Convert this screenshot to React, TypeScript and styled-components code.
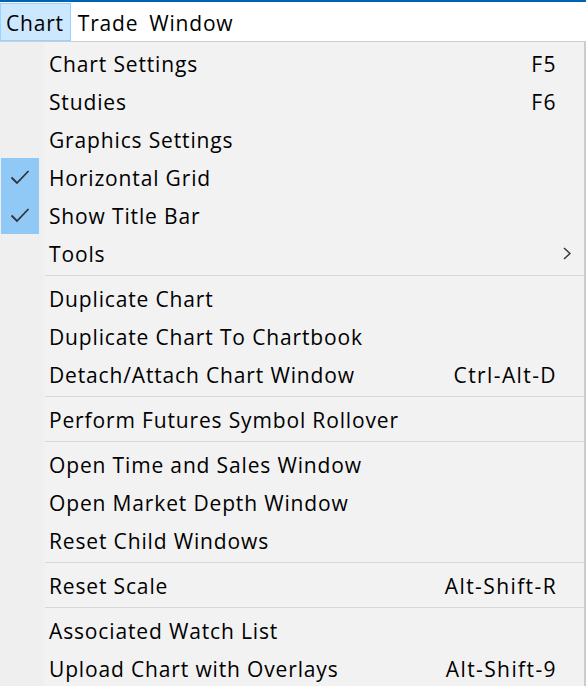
import React from "react";
import styled, { createGlobalStyle } from "styled-components";

const Global = createGlobalStyle`
  html, body { margin: 0; padding: 0; background: #ffffff; }
  body { font-family: "Open Sans", "Noto Sans", sans-serif; overflow: hidden; }
`;

const Frame = styled.div`
  width: 586px;
  height: 686px;
  display: flex;
  flex-direction: column;
  overflow: hidden;
  border-top: 2px solid #0063b1;
  box-sizing: border-box;
`;

const MenuBar = styled.div`
  height: 39px;
  display: flex;
  align-items: stretch;
  background: #ffffff;
  border-bottom: 1px solid #cccccc;
  flex-shrink: 0;
`;

const BarItem = styled.div<{ $open?: boolean }>`
  display: flex;
  align-items: center;
  padding: ${(p) => (p.$open ? "1px 6px 0 5px" : "1px 4px 0 5px")};
  margin-right: ${(p) => (p.$open ? "1px" : "0")};
  font-size: 21px;
  letter-spacing: 0.8px;
  color: #000;
  background: ${(p) => (p.$open ? "#cce8ff" : "transparent")};
  border: 1px solid ${(p) => (p.$open ? "#99d1ff" : "transparent")};
  margin-top: 1px;
`;

const Dropdown = styled.div`
  flex: 1;
  background: #f2f2f2;
  border-right: 2px solid #cccccc;
  padding-top: 2px;
  display: flex;
  flex-direction: column;
  background-image: linear-gradient(to right, #efefef 0, #efefef 44px, transparent 44px);
`;

const Row = styled.div`
  height: 38px;
  flex-shrink: 0;
  display: grid;
  grid-template-columns: 39px 1fr auto 28px;
  align-items: center;
  font-size: 21px;
  letter-spacing: 0.85px;
  color: #000;
`;

const Check = styled.div<{ $on?: boolean }>`
  height: 38px;
  margin-left: 1px;
  display: flex;
  align-items: center;
  justify-content: center;
  background: ${(p) => (p.$on ? "#90c8f6" : "transparent")};
`;

const Label = styled.span`
  padding: 2px 0 0 10px;
  white-space: nowrap;
`;

const Shortcut = styled.span`
  padding-top: 2px;
  white-space: nowrap;
  letter-spacing: 1.4px;
  margin-right: -1px;
`;

const Arrow = styled.div`
  display: flex;
  align-items: center;
  padding-left: 7px;
`;

const Separator = styled.div`
  height: 7px;
  flex-shrink: 0;
  margin-left: 45px;
  box-sizing: border-box;
  padding-top: 3px;
  &::after {
    content: "";
    display: block;
    height: 1px;
    background: #d7d7d7;
  }
`;

type Item =
  | { kind: "sep" }
  | { kind: "item"; label: string; key?: string; checked?: boolean; sub?: boolean };

const items: Item[] = [
  { kind: "item", label: "Chart Settings", key: "F5" },
  { kind: "item", label: "Studies", key: "F6" },
  { kind: "item", label: "Graphics Settings" },
  { kind: "item", label: "Horizontal Grid", checked: true },
  { kind: "item", label: "Show Title Bar", checked: true },
  { kind: "item", label: "Tools", sub: true },
  { kind: "sep" },
  { kind: "item", label: "Duplicate Chart" },
  { kind: "item", label: "Duplicate Chart To Chartbook" },
  { kind: "item", label: "Detach/Attach Chart Window", key: "Ctrl-Alt-D" },
  { kind: "sep" },
  { kind: "item", label: "Perform Futures Symbol Rollover" },
  { kind: "sep" },
  { kind: "item", label: "Open Time and Sales Window" },
  { kind: "item", label: "Open Market Depth Window" },
  { kind: "item", label: "Reset Child Windows" },
  { kind: "sep" },
  { kind: "item", label: "Reset Scale", key: "Alt-Shift-R" },
  { kind: "sep" },
  { kind: "item", label: "Associated Watch List" },
  { kind: "item", label: "Upload Chart with Overlays", key: "Alt-Shift-9" },
];

const CheckMark = () => (
  <svg width="20" height="16" viewBox="0 0 20 16">
    <path d="M1.5 8.5 L7 14 L18.5 2" fill="none" stroke="#333" strokeWidth="1.8" />
  </svg>
);

const Chevron = () => (
  <svg width="8" height="13" viewBox="0 0 8 13">
    <path d="M1 1 L7 6.5 L1 12" fill="none" stroke="#333" strokeWidth="1.4" />
  </svg>
);

export default function App() {
  return (
    <>
      <Global />
      <Frame>
        <MenuBar>
          <BarItem $open>Chart</BarItem>
          <BarItem>Trade</BarItem>
          <BarItem>Window</BarItem>
        </MenuBar>
        <Dropdown>
          {items.map((it, i) =>
            it.kind === "sep" ? (
              <Separator key={i} />
            ) : (
              <Row key={i}>
                <Check $on={it.checked}>{it.checked && <CheckMark />}</Check>
                <Label>{it.label}</Label>
                <Shortcut>{it.key}</Shortcut>
                <Arrow>{it.sub && <Chevron />}</Arrow>
              </Row>
            )
          )}
        </Dropdown>
      </Frame>
    </>
  );
}
